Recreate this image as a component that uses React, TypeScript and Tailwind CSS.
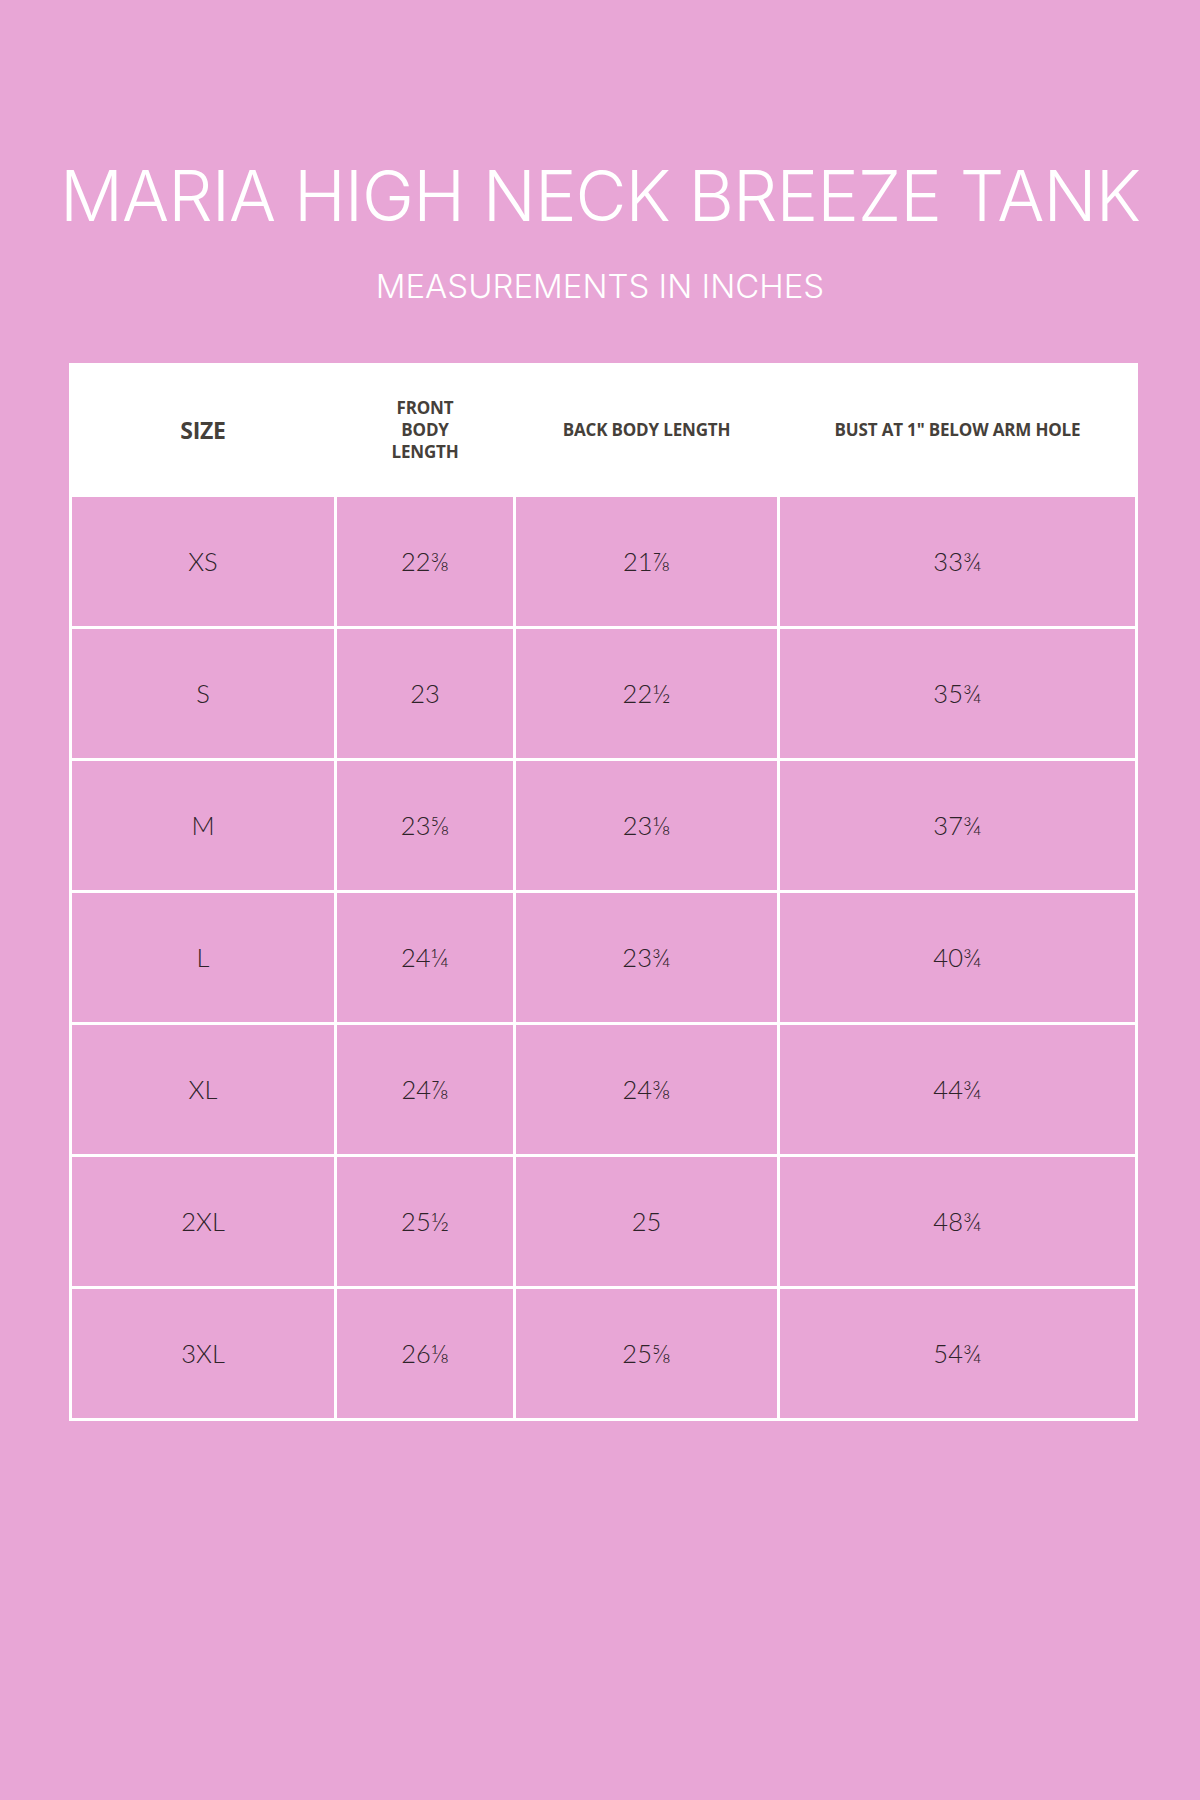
const rows: [string, string, string, string][] = [
  ["XS", "22⅜", "21⅞", "33¾"],
  ["S", "23", "22½", "35¾"],
  ["M", "23⅝", "23⅛", "37¾"],
  ["L", "24¼", "23¾", "40¾"],
  ["XL", "24⅞", "24⅜", "44¾"],
  ["2XL", "25½", "25", "48¾"],
  ["3XL", "26⅛", "25⅝", "54¾"],
];

const head = "flex h-[128px] items-center justify-center bg-white text-center font-['Open_Sans',sans-serif] text-[17px] font-bold leading-[22px] tracking-[-0.01em] text-[#45403a]";
const cell = "flex h-[129px] items-center justify-center bg-[#e8a6d6] font-['Lato',sans-serif] text-[25.5px] font-light text-[#2e2329]";

export default function App() {
  return (
    <div className="h-[1800px] w-[1200px] bg-[#e8a6d6] pt-[161px]">
      <h1 className="text-center font-['Inter',sans-serif] text-[70px] font-light leading-none tracking-[-0.014em] text-white">
        MARIA HIGH NECK BREEZE TANK
      </h1>
      <p className="mt-[39px] text-center font-['Inter',sans-serif] text-[33px] font-light leading-none text-white">
        MEASUREMENTS IN INCHES
      </p>

      <div className="ml-[69px] mt-[60px] w-[1069px] bg-white p-[3px]">
        <div className="grid grid-cols-[262px_176px_261px_355px] gap-[3px]">
          <div className={head + " text-[23px]"}>SIZE</div>
          <div className={head}>
            FRONT
            <br />
            BODY
            <br />
            LENGTH
          </div>
          <div className={head}>BACK BODY LENGTH</div>
          <div className={head}>BUST AT 1" BELOW ARM HOLE</div>

          {rows.map((r) =>
            r.map((v, i) => (
              <div key={r[0] + i} className={cell}>
                {v}
              </div>
            )),
          )}
        </div>
      </div>
    </div>
  );
}
